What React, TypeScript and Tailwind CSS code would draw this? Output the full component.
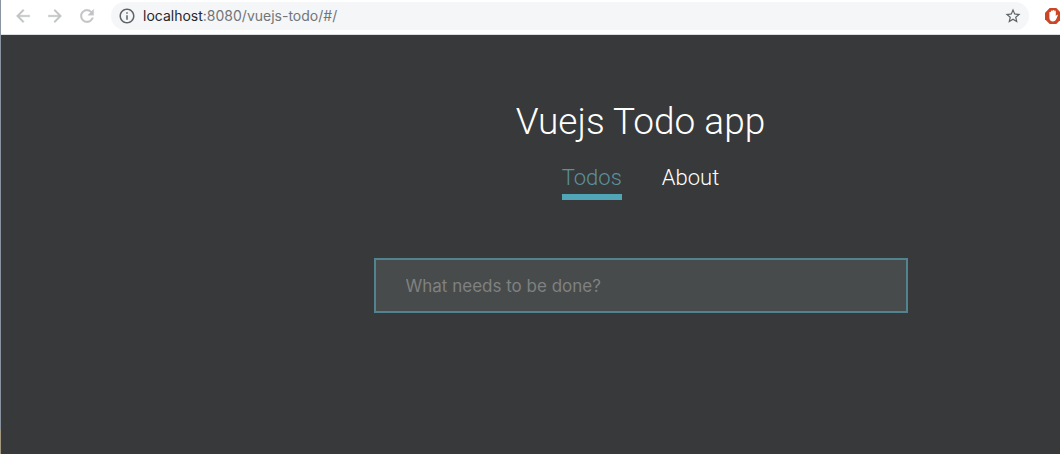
import { useState } from "react";

type Tab = "Todos" | "About";

function NavIcon({ label, d }: { label: string; d: string }) {
  return (
    <button type="button" aria-label={label} className="flex size-5 items-center justify-center text-[#c1c3c5]">
      <svg viewBox="0 0 24 24" className="size-5" fill="currentColor" stroke="currentColor" strokeWidth="0.4" aria-hidden="true">
        <path d={d} />
      </svg>
    </button>
  );
}

function BrowserBar() {
  return (
    <header className="flex h-[35px] items-center overflow-hidden border-b border-[#dcdee1] bg-white pb-0.5 pl-3">
      <div className="flex shrink-0 gap-3">
        <NavIcon label="Back" d="M20 11H7.83l5.59-5.59L12 4l-8 8 8 8 1.41-1.41L7.83 13H20v-2z" />
        <NavIcon label="Forward" d="M12 4l-1.41 1.41L16.17 11H4v2h12.17l-5.58 5.59L12 20l8-8z" />
        <NavIcon
          label="Reload"
          d="M17.65 6.35C16.2 4.9 14.21 4 12 4c-4.42 0-7.99 3.58-7.99 8s3.57 8 7.99 8c3.73 0 6.84-2.55 7.73-6h-2.08c-.82 2.33-3.04 4-5.65 4-3.31 0-6-2.69-6-6s2.69-6 6-6c1.66 0 3.14.69 4.22 1.78L13 11h7V4l-2.35 2.35z"
        />
      </div>
      <div className="ml-[14px] flex h-7 min-w-0 flex-1 items-center rounded-full bg-[#f4f6f8] px-[7px]">
        <svg viewBox="0 0 24 24" className="size-[18px] shrink-0" fill="#5f6368" aria-hidden="true">
          <path d="M11 7h2v2h-2zm0 4h2v6h-2zm1-9C6.48 2 2 6.48 2 12s4.48 10 10 10 10-4.480 10-10S17.520 2 12 2zm0 18c-4.410 0-8-3.590-8-8s3.590-8 8-8 8 3.590 8 8-3.590 8-8 8z" />
        </svg>
        <p className="ml-[7px] flex-1 truncate font-['Inter',sans-serif] text-[14px] leading-5 text-[#717579]">
          <span className="text-[#26282b]">localhost</span>:8080/vuejs-todo/#/
        </p>
        <button type="button" aria-label="Bookmark this page" className="shrink-0">
          <svg viewBox="0 0 24 24" className="size-[18px]" fill="#5f6368" aria-hidden="true">
            <path d="M22 9.240l-7.190-.62L12 2 9.190 8.630 2 9.240l5.460 4.730L5.820 21 12 17.270 18.180 21l-1.630-7.030L22 9.240zM12 15.400l-3.760 2.270 1-4.280-3.320-2.880 4.380-.38L12 6.100l1.710 4.040 4.380.38-3.320 2.880 1 4.280L12 15.400z" />
          </svg>
        </button>
      </div>
      <button type="button" aria-label="Ad blocker" className="-mr-px ml-4 shrink-0">
        <svg viewBox="0 0 16 16" className="size-4" aria-hidden="true">
          <path d="M4.700 0h6.600L16 4.700v6.600L11.300 16H4.700L0 11.300V4.700z" fill="#cb4527" />
          <path
            d="M4.400 8V4.600a.8.8 0 0 1 1.600 0V3.300a.8.8 0 0 1 1.600 0V2.700a.8.8 0 0 1 1.600 0v.7a.8.8 0 0 1 1.600 0v4.700l1-1.200c.5-.5 1.300 0 1 .6L11.300 11c-.6 1.600-1.700 2.400-3.400 2.400-2.200 0-3.500-1.500-3.500-3.400z"
            fill="#fff"
          />
        </svg>
      </button>
    </header>
  );
}

export default function App() {
  const [tab, setTab] = useState<Tab>("Todos");
  const tabs: Tab[] = ["Todos", "About"];

  return (
    <div className="flex min-h-screen bg-[#38393a] font-['Roboto',sans-serif]">
      <div className="flex w-px shrink-0 flex-col" aria-hidden="true">
        <div className="flex-1 bg-[#8a93a0]" />
        <div className="h-6 bg-[#a39880]" />
      </div>
      <div className="min-w-0 flex-1">
        <BrowserBar />
        <main className="flex flex-col items-center pl-[220px] pt-[63px]">
          <h1 className="text-[37px] font-light leading-12 text-white">Vuejs Todo app</h1>
          <nav className="mt-4 flex gap-10">
            {tabs.map((name) => (
              <a
                key={name}
                href={`#/${name.toLowerCase()}`}
                onClick={() => setTab(name)}
                className={
                  tab === name
                    ? "border-b-6 border-[#50a5b6] text-[22px] font-light leading-8 text-[#5b919c]"
                    : "border-b-6 border-transparent text-[22px] font-light leading-8 text-white"
                }
              >
                {name}
              </a>
            ))}
          </nav>
          <input
            type="text"
            aria-label="New todo"
            placeholder="What needs to be done?"
            className="mt-[58px] h-[55px] w-full max-w-[534px] border-2 border-[#528490] bg-[#484b4b] px-[30px] font-['Inter',sans-serif] text-[17px] text-white outline-none placeholder:text-[#7f8181]"
          />
        </main>
      </div>
    </div>
  );
}
